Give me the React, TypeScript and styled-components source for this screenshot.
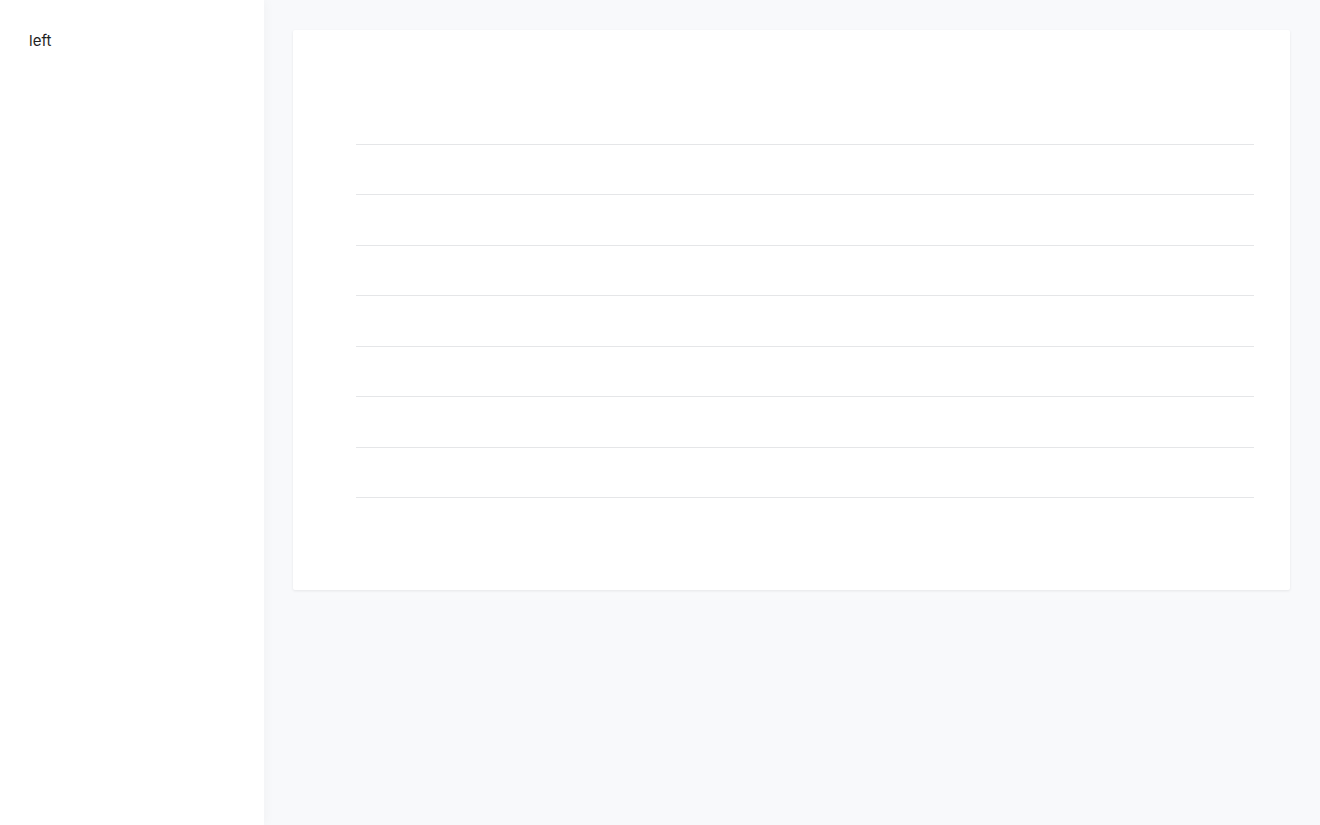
import React from 'react';
import styled, { createGlobalStyle } from 'styled-components';

const GlobalStyle = createGlobalStyle`
  html, body {
    margin: 0;
    padding: 0;
    background: #f8f9fb;
    font-family: Inter, "Noto Sans", "Liberation Sans", sans-serif;
  }
`;

const Layout = styled.div`
  display: flex;
  width: 100%;
  min-height: 825px;
`;

const Sidebar = styled.aside`
  width: 264px;
  flex-shrink: 0;
  background: #ffffff;
  padding: 31px 30px 31px 29px;
  box-sizing: border-box;
  font-size: 15px;
  color: #1f1f1f;
  box-shadow: 2px 0 10px rgba(0, 0, 0, 0.03);
  position: relative;
  z-index: 1;
`;

const Main = styled.main`
  flex: 1;
  background: #f8f9fb;
  padding: 30px 30px 0 29px;
`;

const Card = styled.section`
  background: #ffffff;
  height: 560px;
  box-sizing: border-box;
  border-radius: 2px;
  box-shadow: 0 1px 3px rgba(0, 0, 0, 0.08);
  padding: 114px 36px 0 63px;
`;

const Table = styled.div`
  border-top: 1px solid #e5e6e8;
`;

const Row = styled.div`
  height: 49.43px;
  border-bottom: 1px solid #e5e6e8;
`;

const rows = Array.from({ length: 7 }, (_, i) => i);

export default function App() {
  return (
    <>
      <GlobalStyle />
      <Layout>
        <Sidebar>left</Sidebar>
        <Main>
          <Card>
            <Table>
              {rows.map(r => (
                <Row key={r} />
              ))}
            </Table>
          </Card>
        </Main>
      </Layout>
    </>
  );
}
